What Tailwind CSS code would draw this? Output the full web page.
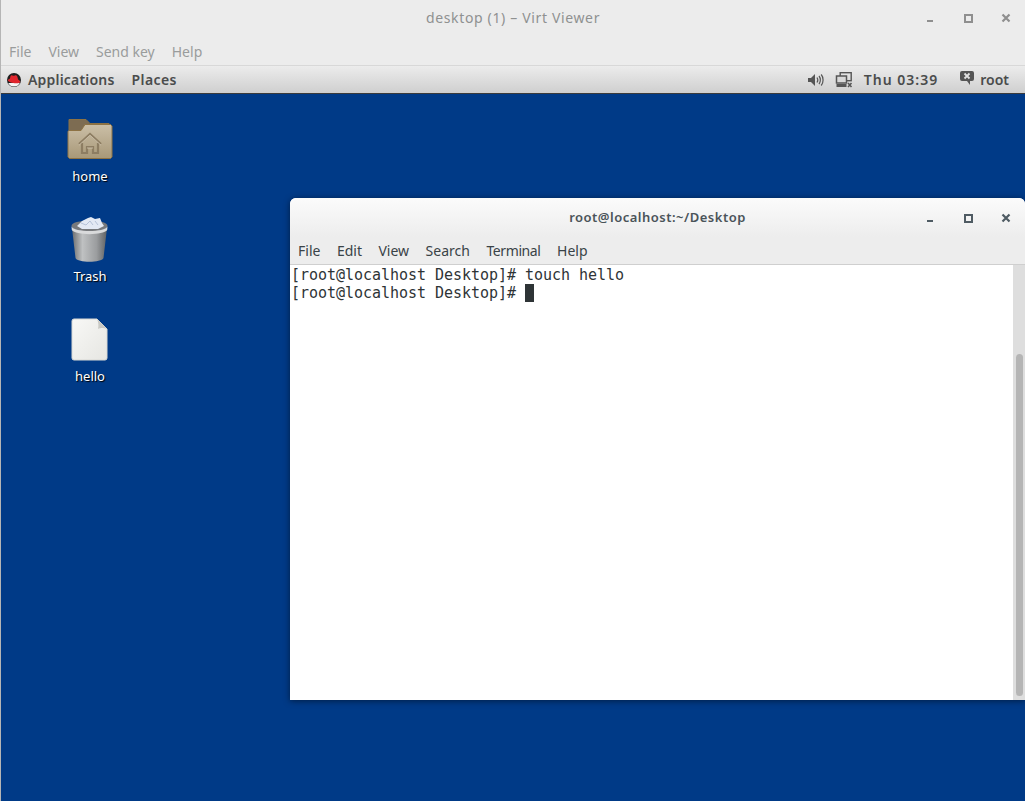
<!DOCTYPE html>
<html lang="en">
<head>
  <meta charset="UTF-8" />
  <title>desktop (1) - Virt Viewer</title>
  <script src="https://cdn.jsdelivr.net/npm/@tailwindcss/browser@4"></script>
</head>
<body class="w-[1025px] h-[801px] overflow-hidden bg-[#003a87] font-['Noto_Sans',sans-serif]">
<div class="flex flex-col h-[801px] border-l border-l-[#b5b5b5]">

  <!-- Virt Viewer title bar -->
  <header class="relative h-[36px] shrink-0 bg-[#ececec] flex items-center justify-center">
    <span class="mb-[2px] text-[14px] text-[#8f9191] tracking-[0.65px]">desktop (1) – Virt Viewer</span>
    <div class="absolute top-[13px] right-[14px] flex items-center gap-[28px]">
      <svg width="11" height="10" viewBox="0 0 11 10"><rect x="2" y="7" width="6" height="2" fill="#8f8f8f"/></svg>
      <svg width="9" height="9" viewBox="0 0 9 9"><rect x="1" y="1" width="7" height="7" fill="none" stroke="#8f8f8f" stroke-width="2"/></svg>
      <svg width="10" height="10" viewBox="0 0 10 10"><path d="M1.500 1.500l7 7M8.500 1.500l-7 7" stroke="#8f8f8f" stroke-width="2.200"/></svg>
    </div>
  </header>

  <!-- Virt Viewer menu -->
  <nav class="h-[30px] shrink-0 bg-[#ececec] border-b border-b-[#d8d8d8] flex items-center gap-[17px] pl-[8px] pt-[1px] text-[14px] text-[#9a9c9c]">
    <span>File</span>
    <span>View</span>
    <span>Send key</span>
    <span>Help</span>
  </nav>

  <!-- GNOME panel -->
  <div class="h-[28px] shrink-0 bg-gradient-to-b from-[#ececec] to-[#cfcfcf] border-b border-b-[#3b3b3b] flex items-center text-[14px] font-semibold text-[#4a4c4c]">
    <svg class="ml-[6px]" width="14" height="14" viewBox="0 0 14 14">
      <circle cx="7" cy="7" r="7" fill="#1e1e1e"/>
      <path d="M1.200 10A6.500 6.500 0 0 0 12.800 10Z" fill="#f6f6f6"/>
      <path d="M.8 7.600C2 9.800 9 11.200 12.600 9.800c1-.6.800-1.600-.2-2.300l-1.300-1C10.700 4.800 10.300 2.200 9 2.200c-1 0-1.500.5-2.500.5-1 0-1.700-.6-2.500-.3C3 3 3.400 5 2.800 5.800 2 6.400.5 6.400.8 7.600Z" fill="#e0252d"/>
    </svg>
    <span class="ml-[7px] tracking-[0.2px]">Applications</span>
    <span class="ml-[17px] tracking-[0.4px]">Places</span>
    <div class="ml-auto flex items-center">
      <svg width="16" height="14" viewBox="0 0 16 14" fill="none">
        <path d="M0 5h3l4-4v12l-4-4H0Z" fill="#555"/>
        <path d="M9 4.500c1 1.500 1 3.500 0 5M11 3c1.800 2.200 1.800 5.800 0 8M13.200 1.500c2.500 3 2.500 8 0 11" stroke="#555" stroke-width="1.200"/>
      </svg>
      <svg class="ml-[11px]" width="18" height="16" viewBox="0 0 17 16" fill="none">
        <rect x="4.700" y="0.700" width="11" height="8" stroke="#555" stroke-width="1.400"/>
        <rect x="1" y="4" width="10" height="7" fill="#d9d9d9" stroke="#555" stroke-width="1.500"/>
        <rect x="1" y="12" width="10" height="3" fill="#555"/>
        <path d="M12.500 11l3.500 4M16 11l-3.500 4" stroke="#555" stroke-width="1.500"/>
      </svg>
      <span class="ml-[11px] tracking-[1px]">Thu 03:39</span>
      <svg class="ml-[22px] mb-[3px]" width="14" height="14" viewBox="0 0 14 14">
        <path d="M2 0h10a2 2 0 0 1 2 2v6a2 2 0 0 1-2 2h-2v4l-3-4H2a2 2 0 0 1-2-2V2a2 2 0 0 1 2-2Z" fill="#555"/>
        <path d="M4.500 2.500l5 5M9.500 2.500l-5 5" stroke="#e2e2e2" stroke-width="1.800"/>
      </svg>
      <span class="ml-[6px] mr-[16px]">root</span>
    </div>
  </div>

  <!-- Desktop -->
  <main class="relative flex-1 bg-[#003a87]">

    <div class="w-[178px] flex flex-col items-center pt-[24px] text-[13px] text-white [text-shadow:1px_1px_1px_#000]">
      <div class="h-[100px] flex flex-col items-center">
        <svg width="46" height="42" viewBox="0 0 46 42">
          <defs>
            <linearGradient id="folderFront" x1="0" y1="0" x2="0" y2="1">
              <stop offset="0" stop-color="#cbbfa7"/>
              <stop offset="1" stop-color="#a89878"/>
            </linearGradient>
          </defs>
          <path d="M2 1.500h17l4 4h19l1.500 2v10H2Z" fill="#7d6c52" stroke="#8d7244"/>
          <path d="M1 13.500l1-1h12l4-6h25.500l1.500 1.500v31l-1.500 1.500H2.500L1 39Z" fill="url(#folderFront)" stroke="#8d7244"/>
          <path d="M12 26L23 16l11 10M15 25v10h5v-6h6v6h5V25" fill="none" stroke="#8d7d62" stroke-width="2.200"/>
          <path d="M12 27.200L23 17.200l11 10M20 30h6" fill="none" stroke="#d3c8b2" stroke-width="0.800"/>
        </svg>
        <span class="mt-[7px]">home</span>
      </div>
      <div class="h-[100px] flex flex-col items-center">
        <svg class="-mt-[2px]" width="42" height="48" viewBox="0 0 42 48">
          <defs>
            <linearGradient id="binBody" x1="0" y1="0" x2="1" y2="0">
              <stop offset="0" stop-color="#6b6d6f"/>
              <stop offset="0.3" stop-color="#bfc1c2"/>
              <stop offset="0.7" stop-color="#9b9d9f"/>
              <stop offset="1" stop-color="#5f6163"/>
            </linearGradient>
          </defs>
          <ellipse cx="20.500" cy="10" rx="18" ry="5.500" fill="#77797c"/>
          <path d="M8 10l5-5 6-3 3-1 4 2 5-1 2 5 2 3-6 3H13Z" fill="#e3e9f4"/>
          <path d="M12 7l5 2 4-4 3 4M26 5l3 4" fill="none" stroke="#a9b8d0" stroke-width="0.800"/>
          <path d="M3 12c4 5 31 5 35 0L34.500 42c-2 5-26 5-28 0Z" fill="url(#binBody)"/>
          <path d="M2.500 10.500c3 6 33 6 36 0l-.3 3.500c-4 5.500-31.400 5.500-35.400 0Z" fill="#d9dadb"/>
        </svg>
        <span class="mt-[3px]">Trash</span>
      </div>
      <div class="h-[100px] flex flex-col items-center">
        <svg width="38" height="44" viewBox="0 0 38 44">
          <defs>
            <linearGradient id="sheet" x1="0" y1="0" x2="1" y2="1">
              <stop offset="0" stop-color="#f8f8f6"/>
              <stop offset="1" stop-color="#e6e6e2"/>
            </linearGradient>
          </defs>
          <path d="M3 1h23l10 10v29a2 2 0 0 1-2 2H3a2 2 0 0 1-2-2V3a2 2 0 0 1 2-2Z" fill="url(#sheet)" stroke="#d8d8d4"/>
          <path d="M26 1l10 10c-3-1.500-7-1-9 0 .8-3 .5-7-1-10Z" fill="#c9c9c4"/>
        </svg>
        <span class="mt-[5px]">hello</span>
      </div>
    </div>

    <!-- Terminal window -->
    <section class="absolute left-[289px] top-[104px] w-[735px] h-[502px] flex flex-col rounded-t-[6px] overflow-hidden bg-white shadow-[0_1px_6px_rgba(0,0,0,0.5)]">
      <div class="relative h-[39px] shrink-0 bg-gradient-to-b from-[#fbfbfb] to-[#ededed] flex items-center justify-center">
        <span class="text-[13px] font-semibold text-[#4a5359] tracking-[0.5px]">root@localhost:~/Desktop</span>
        <div class="absolute top-[15px] right-[14px] flex items-center gap-[28px]">
          <svg width="11" height="10" viewBox="0 0 11 10"><rect x="2" y="7" width="6" height="2" fill="#4f5b63"/></svg>
          <svg width="9" height="9" viewBox="0 0 9 9"><rect x="1" y="1" width="7" height="7" fill="none" stroke="#4f5b63" stroke-width="2"/></svg>
          <svg width="10" height="10" viewBox="0 0 10 10"><path d="M1.500 1.500l7 7M8.500 1.500l-7 7" stroke="#4f5b63" stroke-width="2.200"/></svg>
        </div>
      </div>
      <div class="h-[28px] shrink-0 bg-[#ededed] border-b border-b-[#cfcfcf] flex items-center gap-[16.5px] pl-[8px] text-[14px] text-[#3a4347]">
        <span>File</span>
        <span>Edit</span>
        <span>View</span>
        <span>Search</span>
        <span class="tracking-[-0.4px]">Terminal</span>
        <span>Help</span>
      </div>
      <div class="flex-1 flex min-h-0">
        <pre class="flex-1 pl-[1px] pt-[1px] font-['DejaVu_Sans_Mono',monospace] text-[15px] tracking-[-0.03px] leading-[18px] text-[#2e3436]">[root@localhost Desktop]# touch hello
[root@localhost Desktop]# <span class="inline-block w-[9px] h-[18px] align-top bg-[#2e3436]"></span></pre>
        <div class="w-[12px] shrink-0 bg-[#dedede] pl-[3px] pt-[89px] pb-[4px]">
          <div class="w-[7px] h-full rounded-full bg-[#b5b5b5]"></div>
        </div>
      </div>
    </section>
  </main>
</div>
</body>
</html>
